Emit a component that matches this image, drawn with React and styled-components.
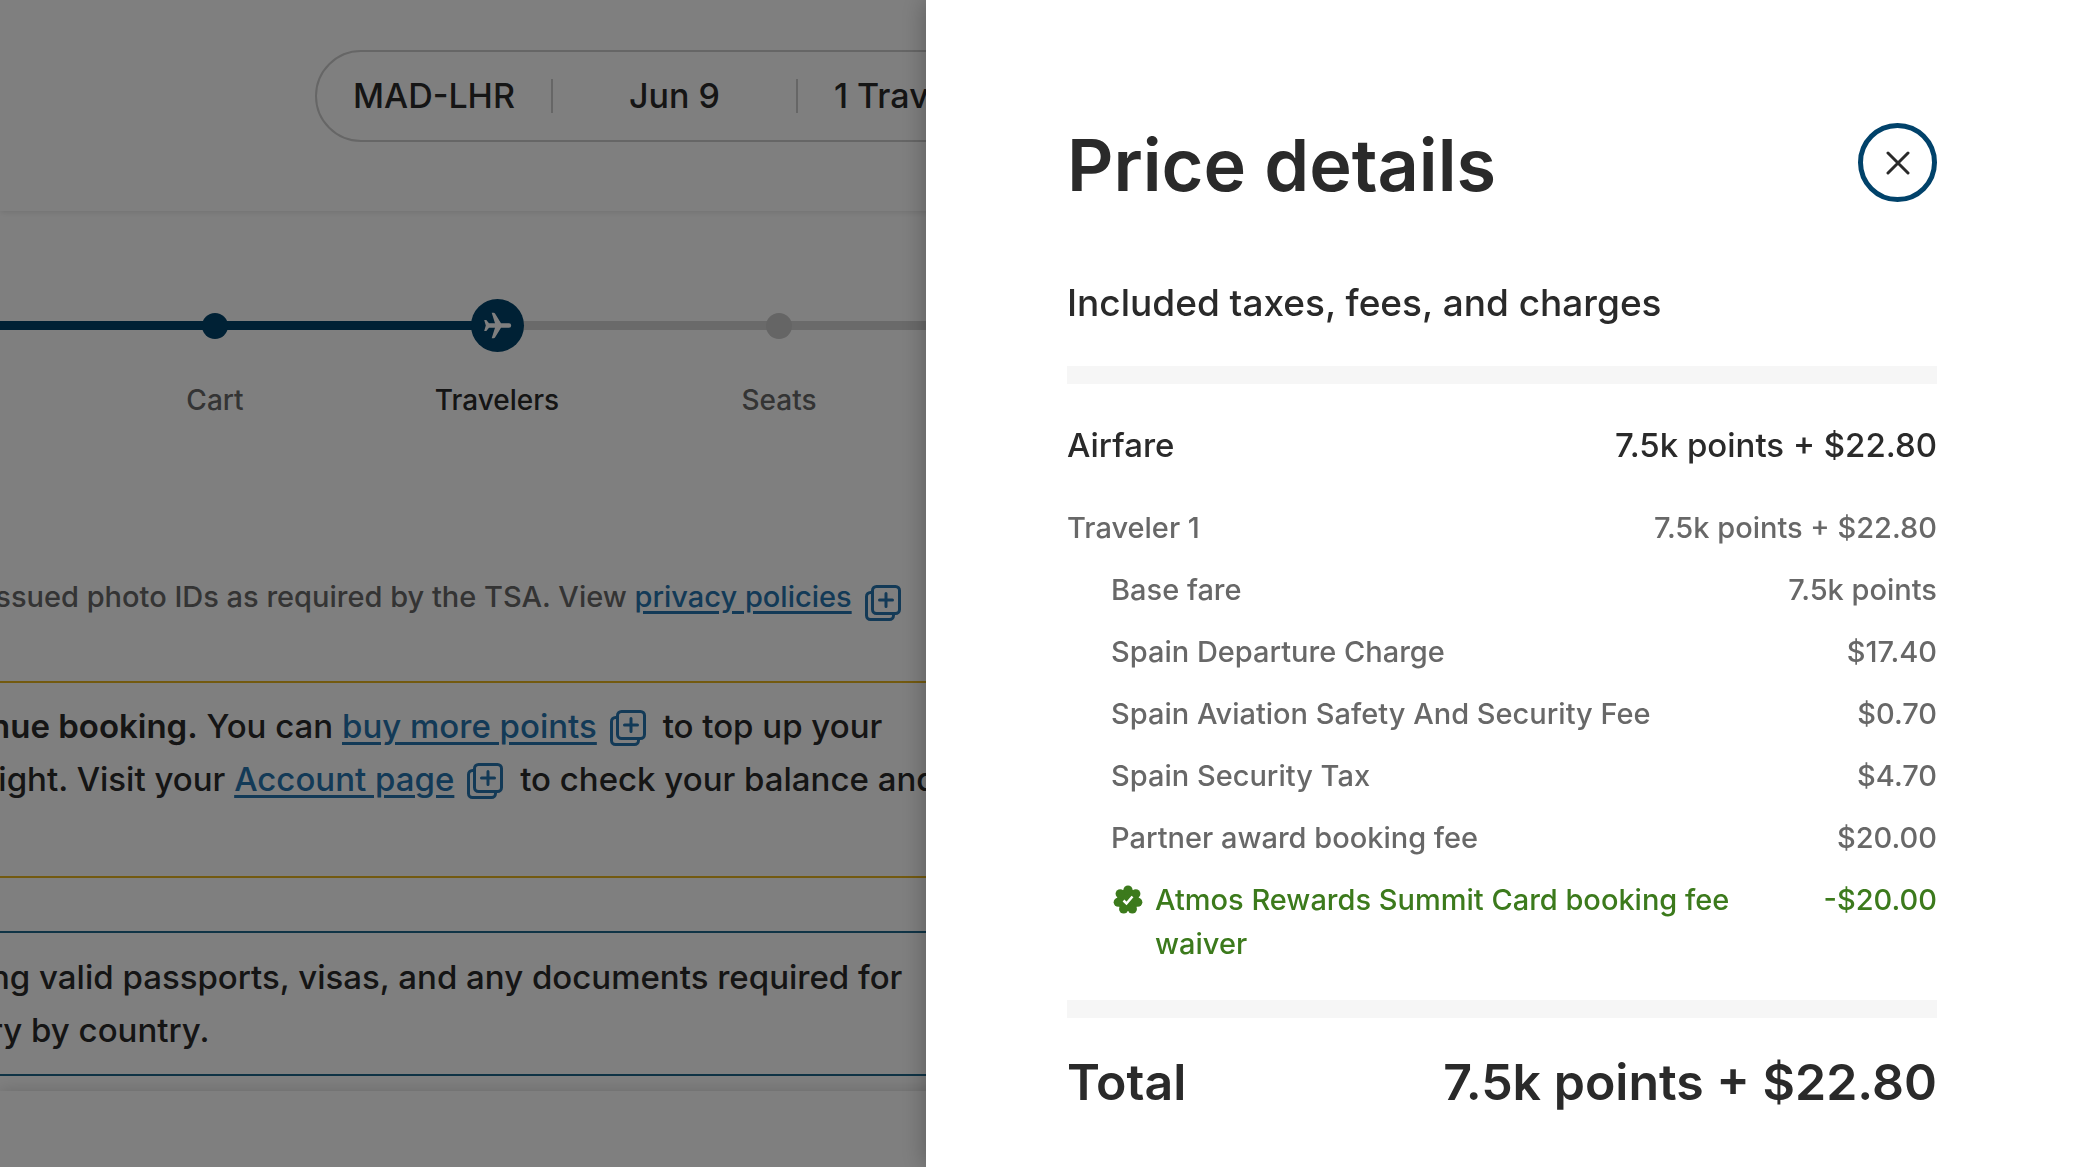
import React from 'react';
import styled, { createGlobalStyle } from 'styled-components';

const lineItems = [
	{ label: 'Base fare', amount: '7.5k points' },
	{ label: 'Spain Departure Charge', amount: '$17.40' },
	{ label: 'Spain Aviation Safety And Security Fee', amount: '$0.70' },
	{ label: 'Spain Security Tax', amount: '$4.70' },
	{ label: 'Partner award booking fee', amount: '$20.00' },
	{ label: 'Atmos Rewards Summit Card booking fee waiver', amount: '-$20.00', waiver: true },
];

const steps = [
	{ label: 'Cart', state: 'done' },
	{ label: 'Travelers', state: 'current' },
	{ label: 'Seats', state: 'next' },
];

const navy = '#01426a';
const track = '#d4d4d4';

const NewWindowIcon = ({ low }) => (
	<LinkIcon $low={low} viewBox="0 0 36 36" aria-hidden="true">
		<path d="M7 7.500h-1.500a4 4 0 0 0-4 4v19a4 4 0 0 0 4 4h19a4 4 0 0 0 4-4v-1.500" />
		<rect x="7.500" y="1.500" width="27" height="27" rx="4" />
		<path d="M21 8.500v13M14.500 15h13" />
	</LinkIcon>
);

const PlaneIcon = () => (
	<svg width="29" height="27" viewBox="0 0 29 27" aria-hidden="true">
		<path fill="currentColor" d="M26 11.300h-8L12 1.500Q11.500.8 10.700.8H8.700l3.300 10.500H6L3.300 8H1.200l1.600 5.500L1.200 19h2.100L6 15.700h6L8.700 26.200h2q.8 0 1.300-.7l6-9.800h8a2.200 2.200 0 0 0 0-4.400Z" />
	</svg>
);

const BadgeIcon = () => (
	<Badge viewBox="0 0 30 30" aria-hidden="true">
		<circle cx="15" cy="15" r="11" />
		{[0, 1, 2, 3, 4, 5, 6].map(i => {
			const angle = (i * 2 * Math.PI) / 7;
			return <circle key={i} cx={15 + 10 * Math.sin(angle)} cy={15 - 10 * Math.cos(angle)} r="4.600" />;
		})}
		<polyline points="10.500 15.500 13.500 18.500 19.500 11.500" />
	</Badge>
);

export default function App() {
	return (
		<>
			<GlobalStyle />
			<Page>
				<Header>
					<TripSummary>
						<TripPart>MAD-LHR</TripPart>
						<TripPart $wide>Jun 9</TripPart>
						<TripPart>1 Traveler</TripPart>
					</TripSummary>
				</Header>
				<Stepper>
					{steps.map(({ label, state }) => (
						<Step key={label} $state={state}>
							<Marker $state={state}>
								<Dot $state={state}>{state === 'current' && <PlaneIcon />}</Dot>
							</Marker>
							{label}
						</Step>
					))}
				</Stepper>
				<Content>
					<Hint>
						issued photo IDs as required by the TSA. View <TextLink href="#">privacy policies</TextLink>
						<NewWindowIcon low />
					</Hint>
					<Warning>
						<p>
							<strong>nue booking.</strong> You can <TextLink href="#">buy more points</TextLink>
							<NewWindowIcon /> to top up your
						</p>
						<p>
							light. Visit your <TextLink href="#">Account page</TextLink>
							<NewWindowIcon /> to check your balance and
						</p>
					</Warning>
					<Info>
						<p>ng valid passports, visas, and any documents required for</p>
						<p>ry by country.</p>
					</Info>
				</Content>
				<Footer />
			</Page>
			<Overlay />
			<Drawer role="dialog" aria-labelledby="drawer-title">
				<DrawerHeader>
					<Title id="drawer-title">Price details</Title>
					<CloseButton aria-label="Close">
						<svg width="24" height="24" viewBox="0 0 24 24" aria-hidden="true">
							<path d="M2 2l20 20M22 2L2 22" />
						</svg>
					</CloseButton>
				</DrawerHeader>
				<Subtitle>Included taxes, fees, and charges</Subtitle>
				<Rule />
				<Airfare>
					<span>Airfare</span>
					<span>7.5k points + $22.80</span>
				</Airfare>
				<Fares>
					<FareRow>
						<span>Traveler 1</span>
						<span>7.5k points + $22.80</span>
					</FareRow>
					{lineItems.map(({ label, amount, waiver }) => (
						<FareRow key={label} $indent $waiver={waiver}>
							<FareLabel>
								{waiver && <BadgeIcon />}
								<span>{label}</span>
							</FareLabel>
							<span>{amount}</span>
						</FareRow>
					))}
				</Fares>
				<Rule />
				<Total>
					<span>Total</span>
					<span>7.5k points + $22.80</span>
				</Total>
			</Drawer>
		</>
	);
}

const GlobalStyle = createGlobalStyle`
	* {
		box-sizing: border-box;
	}

	body {
		margin: 0;
		background: #fff;
		color: #2a2a2a;
		font-family: Inter, "Liberation Sans", sans-serif;
		font-size: 33px;
		font-weight: 480;
	}

	h1, h2, p {
		margin: 0;
	}
`

const Page = styled.div`
	display: flex;
	flex-direction: column;
	height: 100vh;
	overflow: hidden;
	white-space: nowrap;
`

const Header = styled.header`
	padding: 50px 0 69px 315px;
	box-shadow: 0 1px 6px rgba(0, 0, 0, 0.12);
`

const TripSummary = styled.div`
	display: inline-flex;
	align-items: center;
	height: 92px;
	border: 2px solid #cdcdcd;
	border-radius: 46px;
	font-size: 34px;
	vertical-align: top;
`

const TripPart = styled.span`
	padding: 0 ${props => props.$wide ? '76px' : '36px'};
	line-height: 34px;

	& + & {
		border-left: 2px solid #cdcdcd;
	}
`

const Stepper = styled.ol`
	display: flex;
	margin: 0;
	padding: 88px 0 0;
	list-style: none;
	font-size: 28px;

	&::before {
		content: "";
		width: 74px;
		height: 9px;
		margin-top: 22px;
		background: ${navy};
	}

	&::after {
		content: "";
		flex: 1;
		height: 9px;
		margin-top: 22px;
		background: ${track};
	}
`

const Step = styled.li`
	display: flex;
	flex-direction: column;
	gap: 28px;
	width: 282px;
	line-height: 40px;
	text-align: center;
	color: ${props => props.$state === 'current' ? '#2a2a2a' : '#686868'};
`

const Marker = styled.div`
	display: flex;
	align-items: center;
	height: 53px;

	&::before, &::after {
		content: "";
		flex: 1;
		height: 9px;
		/* tuck the track under the round marker */
		margin: 0 -4px;
	}

	&::before {
		background: ${props => props.$state === 'next' ? track : navy};
	}

	&::after {
		background: ${props => props.$state === 'done' ? navy : track};
	}
`

const Dot = styled.span`
	z-index: 1;
	display: grid;
	place-items: center;
	width: ${props => props.$state === 'current' ? '53px' : '26px'};
	height: ${props => props.$state === 'current' ? '53px' : '26px'};
	border-radius: 50%;
	background: ${props => props.$state === 'next' ? '#cacaca' : navy};
	color: #fff;
`

const Content = styled.main`
	margin-left: -12px;
	padding-top: 155px;
`

const LinkIcon = styled.svg`
	width: 36px;
	height: 36px;
	margin: 0 8px 0 13px;
	vertical-align: ${props => props.$low ? '-14px' : '-8px'};
	fill: none;
	stroke: #2774ae;
	stroke-width: 3;
	stroke-linecap: round;
	stroke-linejoin: round;
`

const Hint = styled.p`
	height: 44px;
	color: #686868;
	font-size: 29px;
	line-height: 44px;
`

const TextLink = styled.a`
	color: #2774ae;
	text-decoration-thickness: 3px;
	text-underline-offset: 4px;
`

const Notice = styled.section`
	border: 2px solid;
	line-height: 53px;

	strong {
		font-weight: 600;
	}
`

const Warning = styled(Notice)`
	margin-top: 62px;
	padding: 17px 0 70px;
	border-color: #e6b420;
`

const Info = styled(Notice)`
	margin-top: 53px;
	padding: 18px 0 17px;
	border-color: #20688c;
`

const Footer = styled.footer`
	flex: 1;
	margin-top: 15px;
	box-shadow: 0 0 16px rgba(0, 0, 0, 0.18);
`

const Overlay = styled.div`
	position: fixed;
	inset: 0;
	z-index: 2;
	background: rgba(0, 0, 0, 0.5);
`

const Drawer = styled.aside`
	position: fixed;
	top: 0;
	right: 0;
	bottom: 0;
	z-index: 3;
	width: 1148px;
	max-width: 100%;
	padding: 123px 137px 0 141px;
	overflow: hidden;
	background: #fff;
	box-shadow: 0 0 24px rgba(0, 0, 0, 0.3);
`

const DrawerHeader = styled.header`
	display: flex;
	justify-content: space-between;
	height: 84px;
`

const Title = styled.h1`
	font-size: 72px;
	font-weight: 600;
	line-height: 84px;
`

const CloseButton = styled.button`
	display: grid;
	place-items: center;
	width: 79px;
	height: 79px;
	padding: 0;
	border: 5px solid ${navy};
	border-radius: 50%;
	background: #fff;

	path {
		stroke: #2a2a2a;
		stroke-width: 3;
		stroke-linecap: round;
	}
`

const Subtitle = styled.h2`
	margin: 68px 0 35px;
	font-size: 37px;
	font-weight: 450;
	line-height: 56px;
`

const Rule = styled.div`
	height: 18px;
	background: #f6f6f6;
`

const Airfare = styled.div`
	display: flex;
	justify-content: space-between;
	margin: 38px 0;
	line-height: 46px;
`

const Fares = styled.div`
	display: grid;
	gap: 18px;
	margin-bottom: 34px;
`

const FareRow = styled.div`
	display: flex;
	justify-content: space-between;
	padding-left: ${props => props.$indent ? '44px' : '0'};
	color: ${props => props.$waiver ? '#3c7a1c' : '#686868'};
	font-size: 29px;
	line-height: 44px;
`

const FareLabel = styled.span`
	display: flex;
	max-width: 632px;
`

const Badge = styled.svg`
	flex: none;
	width: 30px;
	height: 30px;
	margin: 7px 12px 0 2px;
	fill: #3c7a1c;

	polyline {
		fill: none;
		stroke: #fff;
		stroke-width: 2.5;
	}
`

const Total = styled.div`
	display: flex;
	justify-content: space-between;
	margin-top: 32px;
	font-size: 50px;
	font-weight: 600;
	line-height: 64px;
`
